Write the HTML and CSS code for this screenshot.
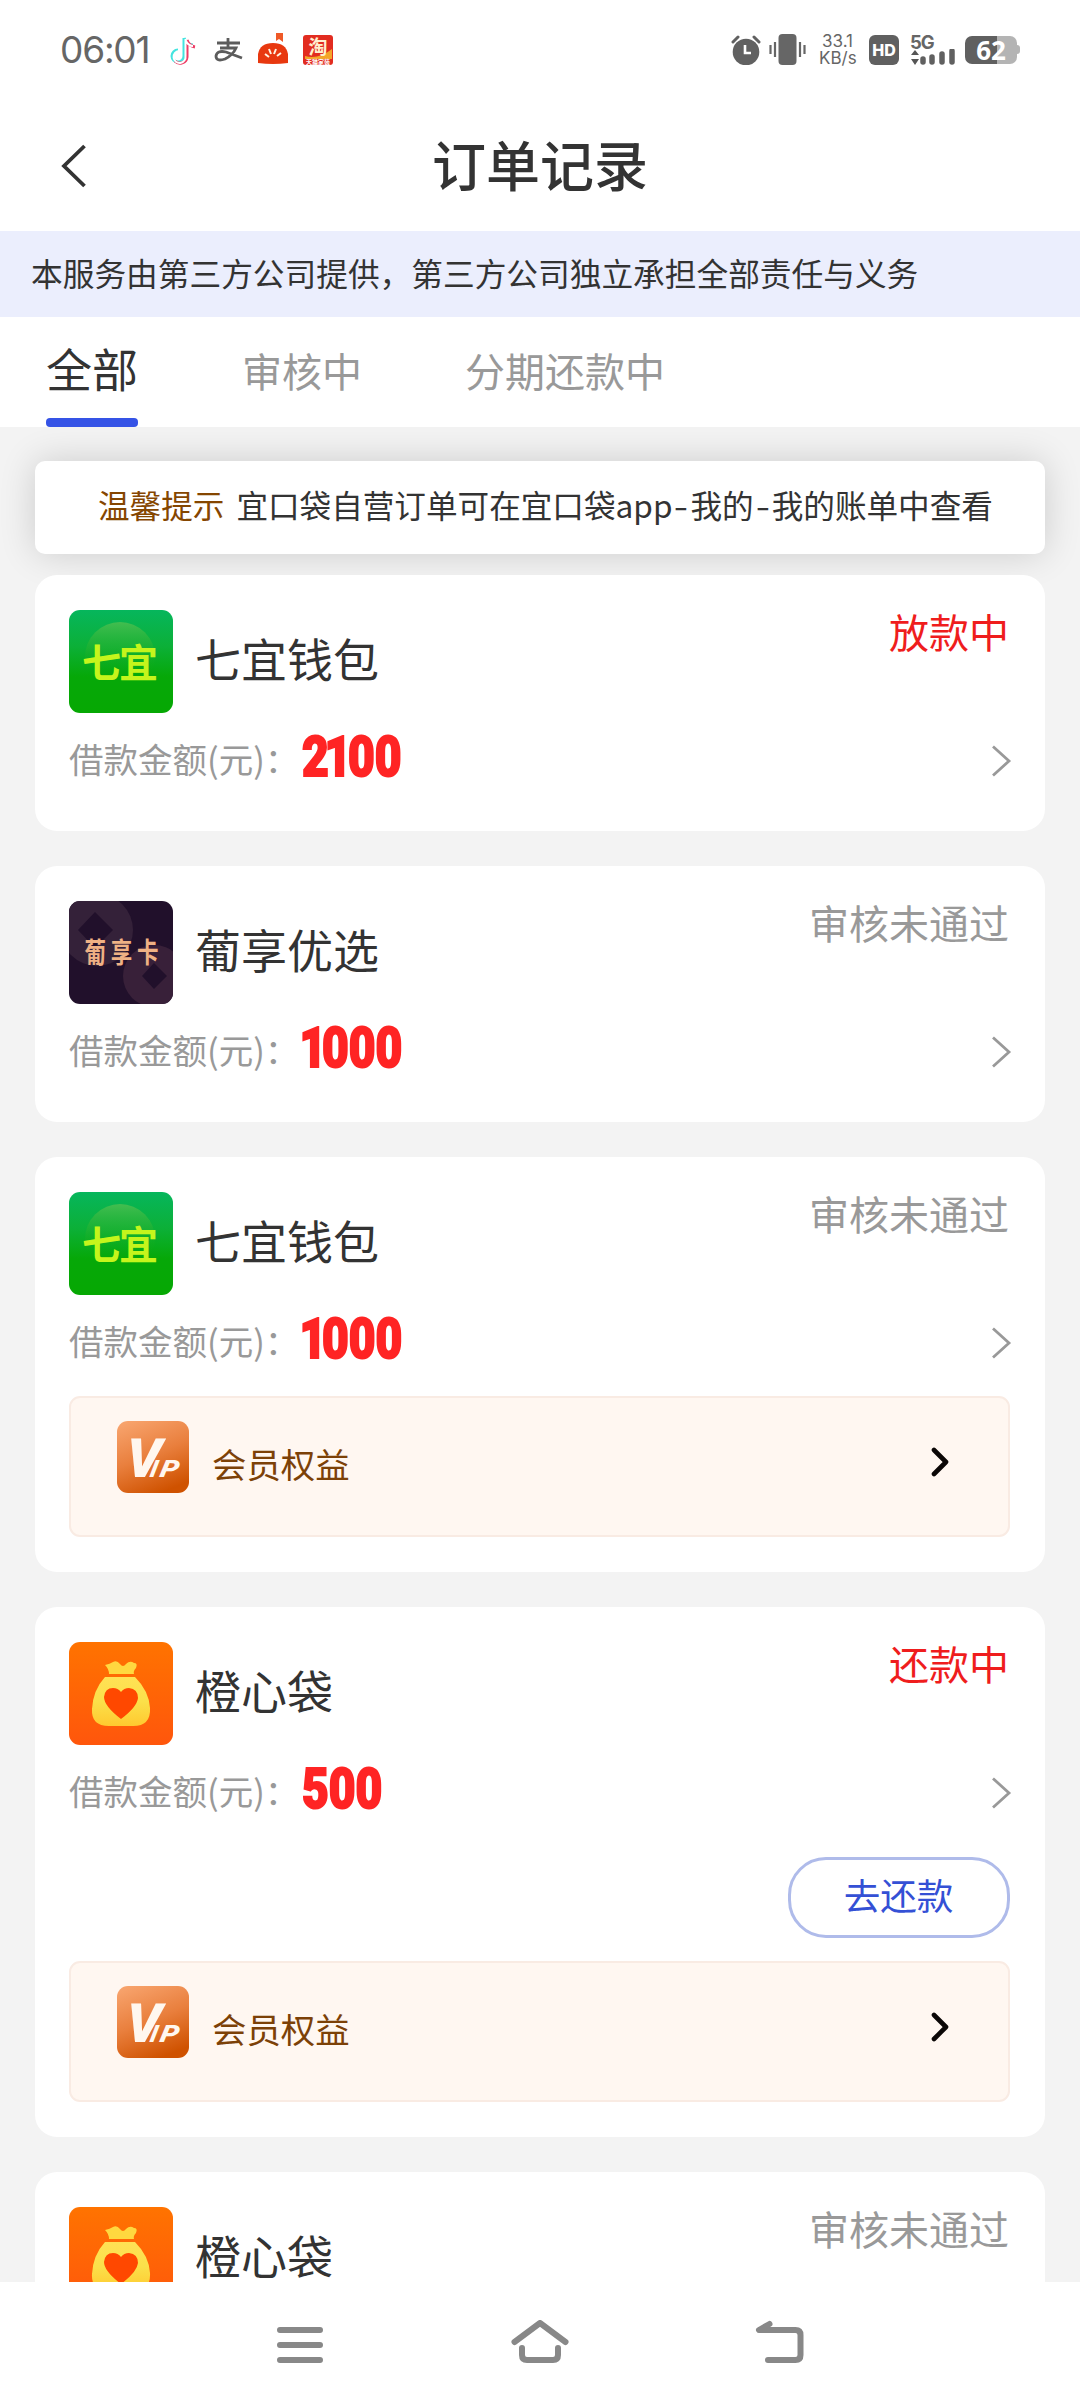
FILE: index.html
```html
<!DOCTYPE html>
<html lang="zh-CN">
<head>
<meta charset="utf-8">
<title>订单记录</title>
<link rel="stylesheet" href="styles.css">
</head>
<body>
<svg class="defs" width="0" height="0" aria-hidden="true">
  <defs>
    <linearGradient id="green" x1="0" y1="0" x2="0" y2="1"><stop offset="0" stop-color="#06b65c"/><stop offset=".35" stop-color="#0cb038"/><stop offset=".65" stop-color="#06a808"/><stop offset="1" stop-color="#06a803"/></linearGradient>
    <linearGradient id="glow" x1="0" y1="0" x2="0" y2="1"><stop offset="0" stop-color="#43bd50"/><stop offset=".7" stop-color="#10aa14" stop-opacity="0"/></linearGradient>
    <linearGradient id="orange" x1="0" y1="0" x2="0" y2="1"><stop offset="0" stop-color="#ff7300"/><stop offset="1" stop-color="#ff560c"/></linearGradient>
    <linearGradient id="gold" x1="0" y1="0" x2="0" y2="1"><stop offset="0" stop-color="#ffe155"/><stop offset=".5" stop-color="#fbe04a"/><stop offset="1" stop-color="#ffc92f"/></linearGradient>
    <linearGradient id="vip" x1=".2" y1="0" x2=".6" y2="1"><stop offset="0" stop-color="#f7a26b"/><stop offset=".5" stop-color="#e97f3d"/><stop offset="1" stop-color="#cf5200"/></linearGradient>
    <symbol id="logo-qiyi" viewBox="0 0 104 103">
      <rect width="104" height="103" fill="url(#green)"/>
      <circle cx="51" cy="47" r="35" fill="url(#glow)"/>
      <text class="logo-word" x="51" y="67" text-anchor="middle" textLength="76">七宜</text>
    </symbol>
    <symbol id="logo-pu" viewBox="0 0 104 103">
      <rect width="104" height="103" fill="#21102b"/>
      <circle cx="28" cy="29" r="36" fill="#342139"/><path d="M26 11 44 29 26 47 9 29Z" fill="#21102b"/>
      <circle cx="85" cy="75" r="31" fill="#382039"/><path d="M85 62 98 75 85 88 73 75Z" fill="#21102b"/>
      <text class="card-word" transform="translate(52.500 62) scale(.86 1.120)" text-anchor="middle" textLength="86">葡享卡</text>
    </symbol>
    <symbol id="logo-bag" viewBox="0 0 104 103">
      <rect width="104" height="103" fill="url(#orange)"/>
      <path d="M36 23q5-1 8-3 4-2 7 2 3 4 6 0 4-4 8-1 4 0 2 5-3 3-2 6H40q0-5-4-9Z" fill="#ffd83f"/>
      <path d="M36 35H66Q80 49 81 66 82 84 64 84H40Q22 84 23 67 24 48 36 35Z" fill="url(#gold)"/>
      <path d="M52 77Q35 64 35 55 36 46 44 46 49 46 52 50 55 46 60 46 69 47 69 56 68 65 52 77Z" fill="#ff4800"/>
    </symbol>
    <symbol id="icon-vip" viewBox="0 0 72 72">
      <rect width="72" height="72" rx="11" fill="url(#vip)"/>
      <text class="vip-v" transform="translate(8 56) skewX(-4)">V</text>
      <text class="vip-ip" transform="translate(32 56) skewX(-12)">I</text>
      <text class="vip-ip" transform="translate(42 56) skewX(-12) scale(1.200 1)">P</text>
    </symbol>
    <symbol id="next" viewBox="0 0 20 32"><path d="M1 1.500 17 16 1 30.500" fill="none" stroke="#999" stroke-width="2.800"/></symbol>
    <symbol id="next-bold" viewBox="0 0 20 30"><path d="M3 3 15 15 3 27" fill="none" stroke="#0b0706" stroke-width="4.600" stroke-linecap="round" stroke-linejoin="round"/></symbol>
  </defs>
</svg>

<header class="status-bar">
  <span class="clock">06:01</span>
  <svg class="app-tiktok" width="28" height="30" viewBox="0 0 28 30"><g fill="none" stroke-width="3"><path d="M15 3V21A6 6 0 1 1 9 15M15 3Q17 10 24 10" stroke="#43e4df"/><path d="M18 5V22A7 7 0 0 1 6 26M18 5Q20 11 26 12" stroke="#ee3d66"/><path d="M16.500 4V21A6 6 0 1 1 10 16M16.500 5Q19 11 24 11" stroke="#fff" stroke-width="2"/></g></svg>
  <svg class="app-pay" width="30" height="24" viewBox="0 0 30 24"><path d="M3 5H26M14 0V10M6 10H22Q19 17 11 21 2 24 2 18 3 12 12 14 20 17 28 20" fill="none" stroke="#5c5c5c" stroke-width="2.800"/></svg>
  <svg class="app-fruit" width="30" height="32" viewBox="0 0 30 32"><path d="M0 31V22Q2 11 15 11 28 11 30 22V31Q15 33 0 31Z" fill="#e8380f"/><path d="M18 1H25V10L21 7 18 9Z" fill="#ef5927"/><path d="M7 22 11 25M11 17 13 22M18 17 16 22M23 21 19 24" stroke="#fff4e4" stroke-width="2"/></svg>
  <svg class="app-tao" width="30" height="30" viewBox="0 0 30 30"><rect width="30" height="30" rx="3" fill="#e22c20"/><path d="M2 21Q15 25 29 14V24H2Z" fill="#f3a529"/><text class="tao" x="15" y="19" text-anchor="middle">淘</text><text class="tao-sub" x="15" y="28.500" text-anchor="middle" textLength="24">天猫家装</text></svg>
  <span class="spacer"></span>
  <svg class="alarm" width="30" height="30" viewBox="0 0 30 30"><circle cx="15" cy="17" r="13.300" fill="#616161"/><path d="M2 7 7 2M23 2 28 7" stroke="#616161" stroke-width="3" stroke-linecap="round"/><path d="M14 10V18H20" fill="none" stroke="#fff" stroke-width="2.600"/></svg>
  <svg class="vibrate" width="37" height="31" viewBox="0 0 37 31"><rect x="9.500" y="0" width="18" height="31" rx="4" fill="#666"/><path d="M1.500 11V20M6 8V23M31 8V23M35.500 11V20" stroke="#666" stroke-width="2.200"/></svg>
  <span class="net-speed"><span>33.1</span><span>KB/s</span></span>
  <span class="hd">HD</span>
  <span class="signal"><span class="gen">5G</span><svg width="46" height="17" viewBox="0 0 46 17"><path d="M1 6 5 1 9 6ZM1 10H9L5 16Z" fill="#555"/><path d="M13 10V13M22 8V13M32 5V13M42 2V13" stroke="#606060" stroke-width="5.500" stroke-linecap="round"/></svg></span>
  <span class="battery">62</span><span class="battery-tip"></span>
</header>

<nav class="title-bar">
  <svg class="back" width="28" height="44" viewBox="0 0 28 44"><path d="M24.500 2 4 22 24.500 42" fill="none" stroke="#333" stroke-width="3.800"/></svg>
  <h1>订单记录</h1>
</nav>
<p class="provider">本服务由第三方公司提供，第三方公司独立承担全部责任与义务</p>
<div class="tabs"><a class="tab active">全部</a><a class="tab">审核中</a><a class="tab">分期还款中</a></div>

<main class="orders">
  <p class="notice"><b>温馨提示</b>宜口袋自营订单可在宜口袋app<span class="dash">-</span>我的<span class="dash">-</span>我的账单中查看</p>

  <section class="card">
    <div class="head"><svg class="logo"><use href="#logo-qiyi"/></svg><h2>七宜钱包</h2><span class="state hot">放款中</span></div>
    <div class="loan"><span class="label">借款金额(元)：</span><span class="amount">2<i>1</i>00</span><svg class="next"><use href="#next"/></svg></div>
  </section>

  <section class="card">
    <div class="head"><svg class="logo"><use href="#logo-pu"/></svg><h2>葡享优选</h2><span class="state">审核未通过</span></div>
    <div class="loan"><span class="label">借款金额(元)：</span><span class="amount"><i class="lead">1</i>000</span><svg class="next"><use href="#next"/></svg></div>
  </section>

  <section class="card">
    <div class="head"><svg class="logo"><use href="#logo-qiyi"/></svg><h2>七宜钱包</h2><span class="state">审核未通过</span></div>
    <div class="loan"><span class="label">借款金额(元)：</span><span class="amount"><i class="lead">1</i>000</span><svg class="next"><use href="#next"/></svg></div>
    <div class="member"><svg class="vip"><use href="#icon-vip"/></svg><span>会员权益</span><svg class="go"><use href="#next-bold"/></svg></div>
  </section>

  <section class="card">
    <div class="head"><svg class="logo"><use href="#logo-bag"/></svg><h2>橙心袋</h2><span class="state hot">还款中</span></div>
    <div class="loan"><span class="label">借款金额(元)：</span><span class="amount">500</span><svg class="next"><use href="#next"/></svg></div>
    <button class="repay">去还款</button>
    <div class="member"><svg class="vip"><use href="#icon-vip"/></svg><span>会员权益</span><svg class="go"><use href="#next-bold"/></svg></div>
  </section>

  <section class="card">
    <div class="head"><svg class="logo"><use href="#logo-bag"/></svg><h2>橙心袋</h2><span class="state">审核未通过</span></div>
  </section>
</main>

<footer class="system-nav">
  <svg width="60" height="50" viewBox="0 0 60 50"><path d="M10 10H50M10 25H50M10 40H50" stroke="#888" stroke-width="6" stroke-linecap="round"/></svg>
  <svg width="60" height="50" viewBox="0 0 60 50"><path d="M4.500 22 30 3 55.500 22" fill="none" stroke="#888" stroke-width="6" stroke-linecap="round" stroke-linejoin="round"/><path d="M12 28V35Q12 40 17 40H43Q48 40 48 35V28" fill="none" stroke="#888" stroke-width="6" stroke-linecap="round"/></svg>
  <svg width="60" height="50" viewBox="0 0 60 50"><path d="M19.500 4 9 10H45.500Q50.500 10 50.500 15V35Q50.500 40 45.500 40H18" fill="none" stroke="#888" stroke-width="6" stroke-linecap="round" stroke-linejoin="round"/></svg>
</footer>
</body>
</html>
```
FILE: styles.css
```css
* { box-sizing: border-box; }
body {
  margin: 0;
  width: 1080px;
  height: 2408px;
  display: flex;
  flex-direction: column;
  overflow: hidden;
  background: #fff;
  color: #333;
  font-family: "Noto Sans CJK SC", sans-serif;
}
h1, h2, p { margin: 0; font-weight: 400; }
svg { display: block; flex: none; }
.defs { position: absolute; }

/* System status bar */
.status-bar { height: 101px; flex: none; display: flex; align-items: center; padding: 0 60px 2px 60px; color: #666; }
.clock { width: 109px; font: 37px/44px Inter, sans-serif; letter-spacing: -1.2px; }
.app-pay { margin-left: 17px; }
.app-fruit { margin-left: 14px; margin-top: -4px; }
.app-tao { margin-left: 15px; overflow: visible; }
.tao { font-size: 19px; font-weight: 700; fill: #fff0d0; }
.tao-sub { font-size: 6px; font-weight: 700; fill: #fff; }
.spacer { flex: 1; }
.vibrate { margin-left: 8px; }
.net-speed { display: flex; flex-direction: column; margin-left: 13px; width: 37px; font: 17px/17px Inter, sans-serif; text-align: center; white-space: nowrap; }
.hd { margin-left: 13px; width: 30px; height: 30px; border-radius: 6px; background: #606060; color: #fff; font: 800 16px/31px Inter, sans-serif; text-align: center; }
.signal { margin-left: 11px; width: 46px; height: 32px; display: flex; flex-direction: column; }
.gen { font: 700 18.500px/16px Inter, sans-serif; height: 15px; letter-spacing: -1px; }
.battery { margin-left: 9px; width: 52px; height: 28px; border-radius: 7px; background: linear-gradient(90deg, #606060 62%, #b4b4b4 62%); color: #fff; font: 700 26px/28px "Noto Sans", sans-serif; text-align: center; }
.battery-tip { width: 3px; height: 9px; background: #b4b4b4; border-radius: 0 3px 3px 0; }

/* Page title */
.title-bar { height: 130px; flex: none; display: grid; grid-template-columns: 90px 1fr 90px; align-items: center; }
.back { margin-left: 60px; }
h1 { text-align: center; font-size: 54px; line-height: 76px; font-weight: 500; padding-bottom: 5px; }
.provider { height: 86px; flex: none; padding-left: 31px; background: #ebeefd; font-size: 31.700px; line-height: 82px; white-space: nowrap; }
.tabs { height: 110px; flex: none; display: flex; padding-left: 46px; }
.tab { margin-right: 103px; font-size: 40px; line-height: 106px; color: #999; height: 110px; }
.tab.active { margin-right: 104px; font-size: 46px; line-height: 101px; color: #333; display: flex; flex-direction: column; }
.tab.active::after { content: ""; height: 9px; border-radius: 4px; background: #3553e6; }

/* Order list */
.orders { height: 1855px; flex: none; overflow: hidden; background: #f3f3f3; padding: 34px 35px 0; }
.notice { height: 93px; margin-bottom: 21px; padding-left: 63px; border-radius: 10px; background: #fff; box-shadow: 0 0 36px rgba(0, 0, 0, .16); font-size: 31.600px; line-height: 87px; white-space: nowrap; }
.notice b { margin-right: 12px; font-weight: 400; color: #854600; }
.dash { display: inline-block; width: 18px; text-align: center; transform: scaleX(1.300); }
.card { min-height: 256px; margin-bottom: 35px; padding: 35px 35px 35px 34px; border-radius: 22px; background: #fff; }
.head { height: 103px; display: flex; }
.logo { width: 104px; height: 103px; border-radius: 11px; }
.logo-word { font-size: 39px; font-weight: 600; fill: #c5f51c; }
.card-word { font-size: 25px; font-weight: 700; fill: #efb184; }
h2 { margin-left: 22px; font-size: 46px; line-height: 94px; }
.state { margin-left: auto; padding-right: 1px; font-size: 40px; line-height: 42px; color: #999; }
.state.hot { color: #ef1d1d; }
.loan { height: 83px; display: flex; align-items: center; padding-top: 13px; }
.label { width: 233px; margin-top: -7px; font-size: 34.500px; line-height: 50px; color: #999; white-space: nowrap; }
.amount { font: 900 55px/60px Roboto, sans-serif; color: #ff2424; -webkit-text-stroke: 2px #ff2424; transform: scaleX(.84); transform-origin: 0 50%; margin-top: -9px; }
.amount i { font-style: normal; margin: 0 -4px 0 -5px; }
.amount i.lead { margin: 0 -5px 0 -3px; }
.next { width: 20px; height: 32px; margin-left: auto; margin-right: -2px; }
.member { height: 141px; margin-top: 18px; display: flex; align-items: flex-start; padding: 23px 57px 0 46px; border: 2px solid #f9ebe3; border-radius: 11px; background: #fff7f1; color: #7c4107; font-size: 34.400px; line-height: 84px; }
.vip { width: 72px; height: 72px; margin-right: 23px; }
.go { width: 20px; height: 30px; margin: 26px 0 0 auto; }
.repay { display: block; width: 222px; height: 81px; margin: 29px 0 23px auto; padding: 0 1px 6px 0; border: 3px solid #afbbea; border-radius: 38px; background: #fff; color: #3450d5; font: 36.600px/70px "Noto Sans CJK SC", sans-serif; }
.vip-v { font: italic 900 54px Roboto, sans-serif; fill: #fff7ef; }
.vip-ip { font: italic 900 24px Roboto, sans-serif; fill: #fff7ef; }

/* System navigation */
.system-nav { height: 126px; flex: none; display: flex; justify-content: center; gap: 180px; padding-top: 38px; }
```
